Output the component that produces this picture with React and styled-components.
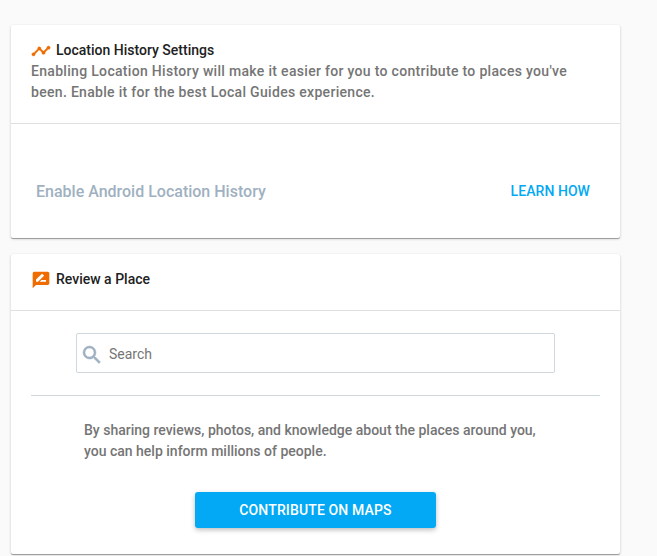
import { useState } from 'react';
import styled, { createGlobalStyle } from 'styled-components';
import { MdTimeline, MdRateReview, MdSearch } from 'react-icons/md';

const color = {
  page: '#fafafa',
  white: '#fff',
  title: '#212121',
  text: '#757575',
  muted: '#9fb1c1',
  orange: '#ef6c00',
  blue: '#03a9f4',
  border: '#e0e0e0',
  inputBorder: '#cfd8dc',
};

const GlobalStyle = createGlobalStyle`
  * {
    box-sizing: border-box;
  }

  body {
    margin: 0;
    background-color: ${color.page};
    font-family: Roboto, sans-serif;
    font-size: 14px;
    font-weight: 500;
  }
`;

const Page = styled.main`
  width: 657px;
  height: 556px;
  padding: 25px 37px 0 11px;
  overflow: hidden;
`;

const Card = styled.section`
  height: ${({ $height }) => $height}px;
  margin-bottom: 16px;
  border-radius: 2px;
  background-color: ${color.white};
  box-shadow: 0 1px 3px rgba(0, 0, 0, 0.2), 0 1px 0 rgba(0, 0, 0, 0.27);
`;

const CardHeader = styled.header`
  height: ${({ $height }) => $height}px;
  padding: 15px 20px 0;
  border-bottom: 1px solid ${color.border};
`;

const TitleRow = styled.div`
  display: flex;
  align-items: center;
  gap: 5px;
  height: 21px;
  color: ${color.orange};
`;

const TimelineIcon = styled(MdTimeline)`
  stroke-width: 0.5;

  path[fill='none'] {
    stroke: none;
  }
`;

const SearchIcon = styled(MdSearch)`
  stroke-width: 0.5;

  path[fill='none'] {
    stroke: none;
  }
`;

const Title = styled.h2`
  margin: 0;
  color: ${color.title};
  font-size: 14px;
  font-weight: 500;
  line-height: 21px;
`;

const Description = styled.p`
  margin: 0;
  color: ${color.text};
  letter-spacing: ${({ $spacing }) => $spacing || 'normal'};
  line-height: 21px;
`;

const SettingRow = styled.div`
  display: flex;
  align-items: center;
  justify-content: space-between;
  height: 114px;
  padding: 21px 30px 0 25px;
`;

const SettingLabel = styled.span`
  color: ${color.muted};
  font-size: 16px;
`;

const LinkButton = styled.button`
  padding: 0 0 2px;
  border: none;
  background-color: transparent;
  color: ${color.blue};
  font: inherit;
  letter-spacing: 0.06px;
  text-transform: uppercase;
`;

const SearchArea = styled.div`
  margin: 0 20px;
  padding: 22px 45px;
  border-bottom: 1px solid ${color.inputBorder};
`;

const SearchBox = styled.label`
  display: flex;
  align-items: center;
  gap: 5px;
  height: 40px;
  padding: 3px 5px 0 3px;
  border: 1px solid ${color.inputBorder};
  border-radius: 2px;
  color: ${color.muted};
`;

const SearchInput = styled.input`
  flex: 1;
  padding: 0 0 2px;
  border: none;
  outline: none;
  color: ${color.title};
  font: inherit;
  font-weight: 400;

  &::placeholder {
    color: ${color.text};
    opacity: 1;
  }
`;

const Contribute = styled.div`
  display: flex;
  flex-direction: column;
  gap: 30px;
  padding: 24px 73px 0;
`;

const ContributeButton = styled.button`
  align-self: center;
  width: 241px;
  height: 36px;
  border: none;
  border-radius: 3px;
  background-color: ${color.blue};
  color: ${color.white};
  font: inherit;
  letter-spacing: 0.14px;
  text-transform: uppercase;
  box-shadow: 0 2px 5px rgba(0, 0, 0, 0.26);
`;

const App = () => {
  const [query, setQuery] = useState('');

  return (
    <>
      <GlobalStyle />
      <Page>
        <Card $height={213}>
          <CardHeader $height={99}>
            <TitleRow>
              <TimelineIcon size={20} />
              <Title>Location History Settings</Title>
            </TitleRow>
            <Description $spacing="0.31px">
              Enabling Location History will make it easier for you to
              contribute to places you've been. Enable it for the best Local
              Guides experience.
            </Description>
          </CardHeader>
          <SettingRow>
            <SettingLabel>Enable Android Location History</SettingLabel>
            <LinkButton>Learn how</LinkButton>
          </SettingRow>
        </Card>
        <Card $height={300}>
          <CardHeader $height={57}>
            <TitleRow>
              <MdRateReview size={20} />
              <Title>Review a Place</Title>
            </TitleRow>
          </CardHeader>
          <SearchArea>
            <SearchBox>
              <SearchIcon size={24} />
              <SearchInput
                placeholder="Search"
                value={query}
                onChange={(e) => setQuery(e.target.value)}
              />
            </SearchBox>
          </SearchArea>
          <Contribute>
            <Description>
              By sharing reviews, photos, and knowledge about the places around
              you, you can help inform millions of people.
            </Description>
            <ContributeButton>Contribute on Maps</ContributeButton>
          </Contribute>
        </Card>
      </Page>
    </>
  );
};

export default App;
